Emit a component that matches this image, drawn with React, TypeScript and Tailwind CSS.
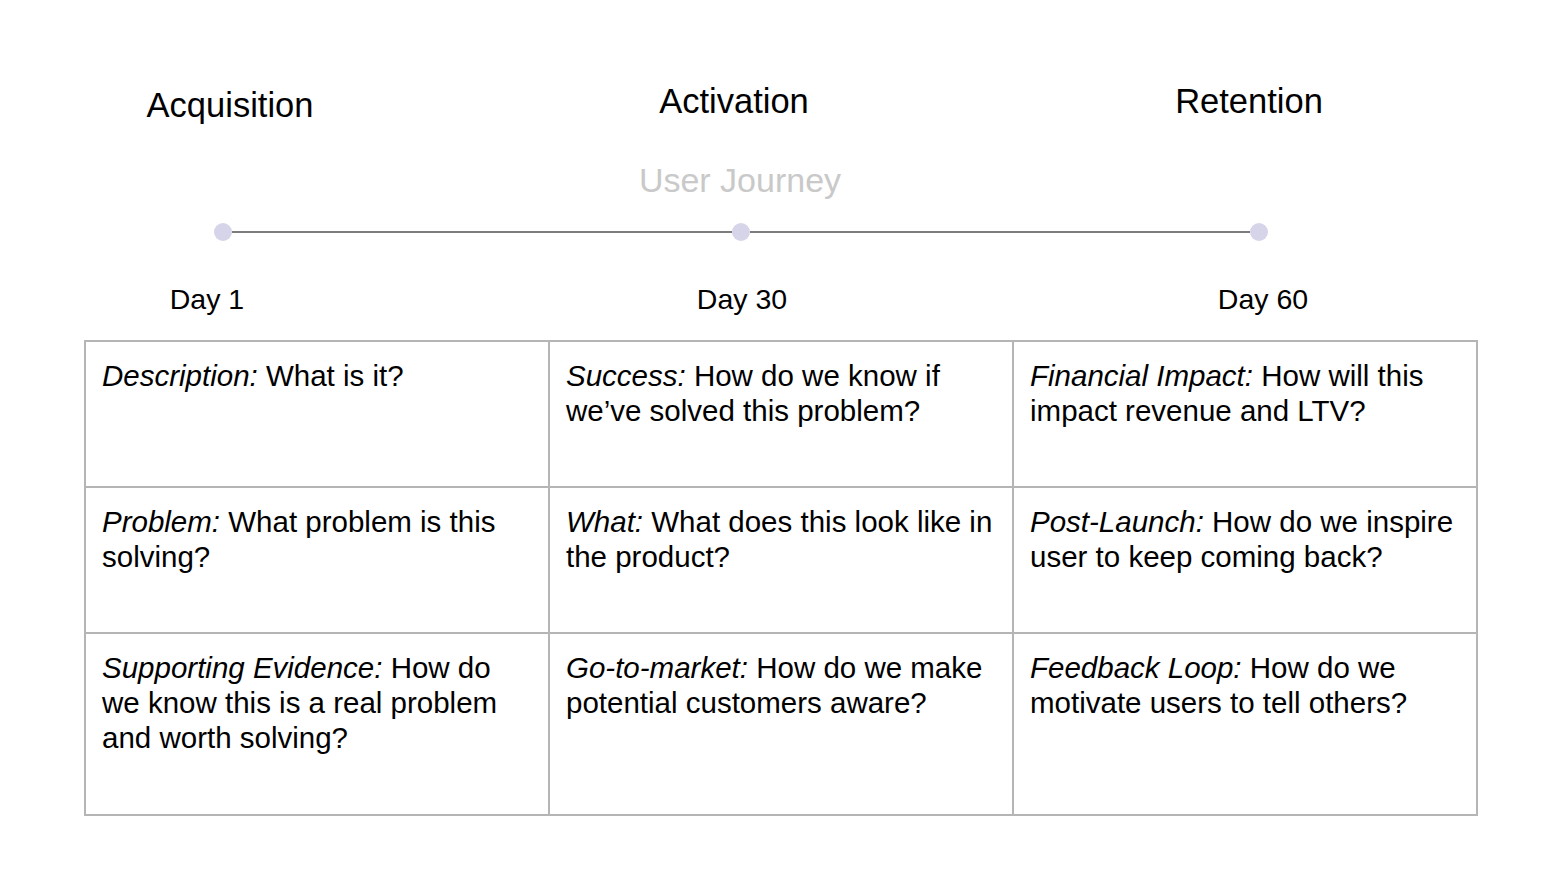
import React from "react";

const cells: { label: string; lines: string[] }[][] = [
  [
    { label: "Description:", lines: [" What is it?"] },
    { label: "Success:", lines: [" How do we know if", "we’ve solved this problem?"] },
    { label: "Financial Impact:", lines: [" How will this", "impact revenue and LTV?"] },
  ],
  [
    { label: "Problem:", lines: [" What problem is this", "solving?"] },
    { label: "What:", lines: [" What does this look like in", "the product?"] },
    { label: "Post-Launch:", lines: [" How do we inspire", "user to keep coming back?"] },
  ],
  [
    { label: "Supporting Evidence:", lines: [" How do", "we know this is a real problem", "and worth solving?"] },
    { label: "Go-to-market:", lines: [" How do we make", "potential customers aware?"] },
    { label: "Feedback Loop:", lines: [" How do we", "motivate users to tell others?"] },
  ],
];

const rowHeights = ["h-[146px]", "h-[146px]", "h-[182px]"];

const Dot = () => <div className="h-[18px] w-[18px] shrink-0 rounded-full bg-[#d6d4e8]" />;

export default function App() {
  return (
    <div className="w-[1559px] h-[877px] bg-white text-black font-['Liberation_Sans',Arial,sans-serif] overflow-hidden">
      {/* stage headings */}
      <div className="flex items-start h-[40px] mt-[81px] text-[34.5px] leading-[40px]">
        <div className="ml-[80px] w-[300px] text-center mt-[4px]">Acquisition</div>
        <div className="ml-[204px] w-[300px] text-center">Activation</div>
        <div className="ml-[215px] w-[300px] text-center">Retention</div>
      </div>

      <div className="mt-[41px] ml-[590px] w-[300px] text-center text-[34px] leading-[36px] text-[#c9c9c9]">
        User Journey
      </div>

      {/* timeline */}
      <div className="mt-[25px] ml-[214px] w-[1054px] flex items-center">
        <Dot />
        <div className="flex-1 h-[2px] bg-[#7d7d7d]" />
        <Dot />
        <div className="flex-1 h-[2px] bg-[#7d7d7d]" />
        <Dot />
      </div>

      <div className="flex mt-[41px] text-[28.5px] leading-[34px]">
        <div className="ml-[107px] w-[200px] text-center">Day 1</div>
        <div className="ml-[335px] w-[200px] text-center">Day 30</div>
        <div className="ml-[321px] w-[200px] text-center">Day 60</div>
      </div>

      {/* table */}
      <div className="mt-[24px] ml-[84px] w-[1394px] border-t-2 border-l-2 border-[#b5b5b5]">
        {cells.map((row, r) => (
          <div key={r} className="grid grid-cols-3">
            {row.map((c, i) => (
              <div
                key={i}
                className={`${rowHeights[r]} border-r-2 border-b-2 border-[#b5b5b5] pl-[16px] pt-[16px] text-[29.5px] leading-[35px] whitespace-nowrap`}
              >
                <div>
                  <span className="italic">{c.label}</span>
                  {c.lines[0]}
                </div>
                {c.lines.slice(1).map((l, j) => (
                  <div key={j}>{l}</div>
                ))}
              </div>
            ))}
          </div>
        ))}
      </div>
    </div>
  );
}
